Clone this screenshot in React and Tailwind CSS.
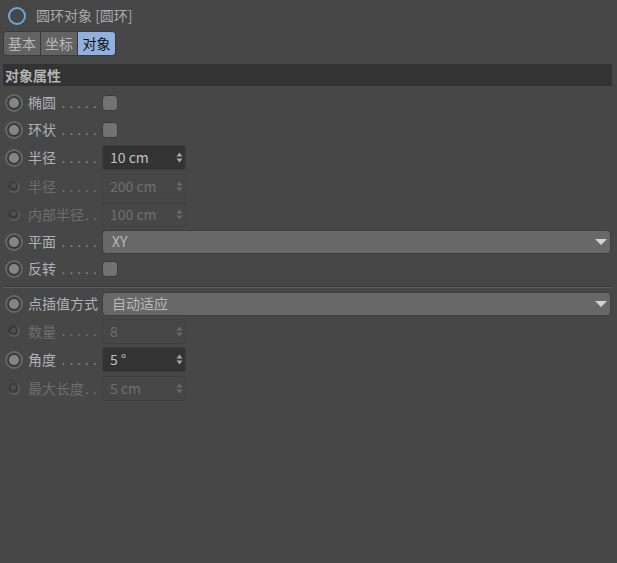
const cjk = { fontFamily: '"Noto Sans CJK SC", "Liberation Sans", sans-serif' };

const Radio = ({ dim }) =>
  dim ? (
    <div className="w-[22px] h-[22px] flex items-center justify-center shrink-0">
      <div className="w-[12px] h-[12px] rounded-full bg-[#3c3c3c] border-r-2 border-b-2 border-[#5c5c5c] flex items-center justify-center">
        <div className="w-[5px] h-[5px] rounded-full bg-[#505050]" />
      </div>
    </div>
  ) : (
    <div className="w-[18px] h-[18px] mx-[2px] rounded-full bg-[#3a3a3a] border-2 border-[#666] flex items-center justify-center shrink-0">
      <div className="w-[10px] h-[10px] rounded-full bg-[#858585]" />
    </div>
  );

const Label = ({ text, dim, dots = '.....' }) => (
  <div className={`w-[74px] ml-[3px] flex items-center text-[14px] whitespace-nowrap ${dim ? 'text-[#6d6d6d]' : 'text-[#aeb2b6]'}`}>
    <span>{text}</span>
    {dots && <span className={`ml-auto mr-[1px] text-[12px] tracking-[4.5px] ${dim ? 'text-[#777]' : 'text-[#8d8d8d]'}`}>{dots}</span>}
  </div>
);

const Check = () => (
  <div className="w-[16px] h-[16px] rounded-[4px] bg-[#727272] border border-[#3c3c3c]" />
);

const Arrows = ({ color }) => (
  <svg width="7" height="11" viewBox="0 0 7 11" className="ml-auto">
    <path d="M3.5 0.5L6.5 4.5H0.5Z M3.5 10.5L0.5 6.5H6.5Z" fill={color} />
  </svg>
);

const NumberField = ({ value, dim }) => (
  <div className={`w-[84px] h-[25px] pl-[7px] pr-[2px] rounded-[3px] flex items-center text-[14px] border ${dim ? 'bg-[#474747] border-[#414141] text-[#6f6f6f]' : 'bg-[#333] border-[#3c3c3c] text-[#c0c0c0]'}`}>
    <span>{value}</span>
    <Arrows color={dim ? '#6a6a6a' : '#a8a8a8'} />
  </div>
);

const Select = ({ value }) => (
  <div className="flex-1 h-[24px] pl-[9px] pr-[3px] rounded-[4px] flex items-center text-[14px] text-[#b8b8b8] bg-[#686868] border border-[#3e3e3e]">
    <span>{value}</span>
    <svg width="12" height="6" viewBox="0 0 12 6" className="ml-auto">
      <path d="M0 0H12L6 6Z" fill="#d2d2d2" />
    </svg>
  </div>
);

const Row = ({ h, children }) => (
  <div className={`flex items-center pl-[3px] pr-[6px] ${h}`}>{children}</div>
);

const Tab = ({ text, active }) => (
  <div className={`w-[37px] h-[23px] flex items-center justify-center text-[14px] border-r last:border-r-0 border-[#3a3a3a] ${active ? 'bg-[#8fb1e0] text-[#111]' : 'bg-[#626262] text-[#b8b8b8]'}`}>
    {text}
  </div>
);

export default function App() {
  return (
    <div className="w-[617px] h-[563px] bg-[#474747] overflow-hidden" style={cjk}>
      <div className="h-[31px] flex items-center pl-[8px]">
        <div className="w-[18px] h-[18px] rounded-full border-2 border-[#6ba6d8]" />
        <span className="ml-[10px] text-[14px] text-[#a9a9a9]">圆环对象 [圆环]</span>
      </div>

      <div className="flex pl-[3px]">
        <div className="flex rounded-[4px] overflow-hidden border border-[#3a3a3a]">
          <Tab text="基本" />
          <Tab text="坐标" />
          <Tab text="对象" active />
        </div>
      </div>

      <div className="mt-[8px] ml-[3px] mr-[5px] h-[22px] pl-[2px] bg-[#333333] flex items-center text-[14px] font-bold text-[#b4b4b4]">
        对象属性
      </div>

      <div className="mt-[3px]">
        <Row h="h-[27px]"><Radio /><Label text="椭圆" /><Check /></Row>
        <Row h="h-[27px]"><Radio /><Label text="环状" /><Check /></Row>
        <Row h="h-[29px]"><Radio /><Label text="半径" /><NumberField value="10 cm" /></Row>
        <Row h="h-[29px]"><Radio dim /><Label text="半径" dim /><NumberField value="200 cm" dim /></Row>
        <Row h="h-[27px]"><Radio dim /><Label text="内部半径" dim dots=".." /><NumberField value="100 cm" dim /></Row>
        <Row h="h-[27px]"><Radio /><Label text="平面" /><Select value="XY" /></Row>
        <Row h="h-[27px]"><Radio /><Label text="反转" /><Check /></Row>
      </div>

      <div className="mt-[4px] ml-[3px] mr-[5px] h-[2px] bg-[#5c5c5c] border-t border-[#3b3b3b]" />

      <div className="mt-[2px]">
        <Row h="h-[27px]"><Radio /><Label text="点插值方式" dots="" /><Select value="自动适应" /></Row>
        <Row h="h-[28px]"><Radio dim /><Label text="数量" dim /><NumberField value="8" dim /></Row>
        <Row h="h-[29px]"><Radio /><Label text="角度" /><NumberField value="5 °" /></Row>
        <Row h="h-[29px]"><Radio dim /><Label text="最大长度" dim dots=".." /><NumberField value="5 cm" dim /></Row>
      </div>
    </div>
  );
}
